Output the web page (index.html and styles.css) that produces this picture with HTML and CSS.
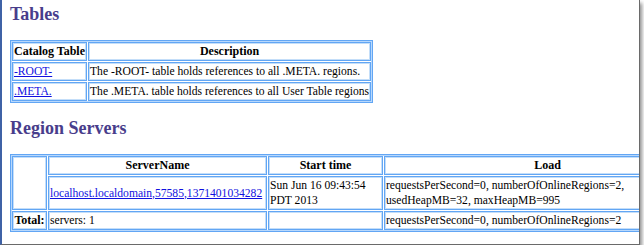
FILE: index.html
```html
<!DOCTYPE html>
<html>
<head>
<meta charset="utf-8">
<title>HBase Master</title>
<link rel="stylesheet" href="styles.css">
</head>
<body>
<div class="frame">
  <div class="page">
    <h2 class="title first">Tables</h2>
    <table class="grid catalog">
      <tr><th>Catalog Table</th><th>Description</th></tr>
      <tr><td><a href="#">-ROOT-</a></td><td>The -ROOT- table holds references to all .META. regions.</td></tr>
      <tr><td><a href="#">.META.</a></td><td>The .META. table holds references to all User Table regions</td></tr>
    </table>
    <h2 class="title">Region Servers</h2>
    <table class="grid servers">
      <tr>
        <th rowspan="2" class="c-idx"></th>
        <th class="c-name">ServerName</th>
        <th class="c-start">Start time</th>
        <th class="c-load">Load</th>
      </tr>
      <tr>
        <td><a href="#">localhost.localdomain,57585,1371401034282</a></td>
        <td>Sun Jun 16 09:43:54 PDT 2013</td>
        <td>requestsPerSecond=0, numberOfOnlineRegions=2, usedHeapMB=32, maxHeapMB=995</td>
      </tr>
      <tr>
        <th>Total:</th>
        <td>servers: 1</td>
        <td></td>
        <td>requestsPerSecond=0, numberOfOnlineRegions=2</td>
      </tr>
    </table>
  </div>
</div>
</body>
</html>
```
FILE: styles.css
```css
html, body {
  margin: 0;
  padding: 0;
  background: #ffffff;
}

.frame {
  width: 637px;
  height: 244px;
  border-left: 2px solid #3f62a6;
  border-right: 1px solid #6a6a6a;
  border-bottom: 1px solid #6a6a6a;
  box-shadow: 2px 3px 4px rgba(0, 0, 0, 0.45);
  background: #ffffff;
  overflow: hidden;
}

.page {
  padding: 0 0 0 8px;
  font-family: "Liberation Serif", "Times New Roman", serif;
  font-size: 12px;
  line-height: 15px;
  color: #000000;
}

.title {
  margin: 15px 0 15px 0;
  font-size: 18px;
  line-height: 21px;
  font-weight: bold;
  color: #483d8b;
}

.title.first {
  margin-top: 4px;
}

.grid {
  border: 1px solid #62a6f4;
  box-shadow: inset 0 0 0 1px #b8d8fc;
  border-spacing: 1px;
  padding: 0;
}

.grid th,
.grid td {
  border: 1px solid #62a6f4;
  box-shadow: inset 0 0 0 1px #c4def9;
  padding: 1px 1px;
  line-height: 15px;
  vertical-align: middle;
}

.grid th {
  font-size: 12px;
  font-weight: bold;
  text-align: center;
}

.grid td {
  font-size: 11.6px;
  text-align: left;
}

.grid a {
  color: #1010e0;
  text-decoration: underline;
}

.servers {
  table-layout: fixed;
  width: 702px;
}

.servers th,
.servers td {
  box-sizing: border-box;
}

.servers .c-idx { width: 35px; }
.servers .c-name { width: 219px; }
.servers .c-start { width: 115px; }
.servers .c-load { width: 327px; }
```
